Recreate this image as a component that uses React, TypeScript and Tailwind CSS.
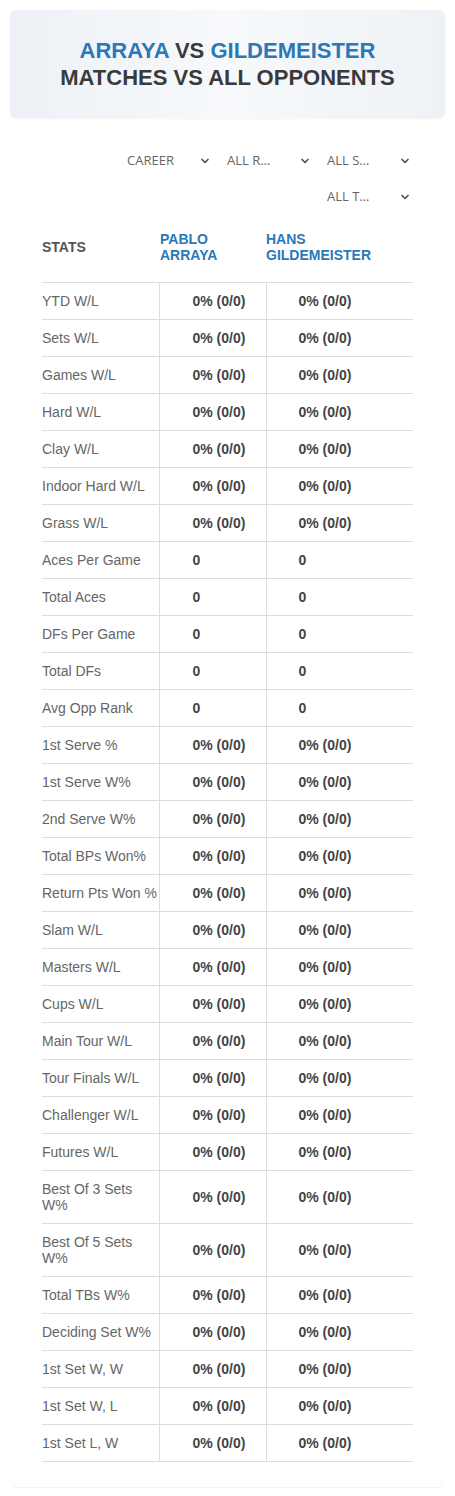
import React from 'react';
import { ChevronDown } from 'lucide-react';

type Row = {
  label: string;
  a: string;
  b: string;
};

const pct = '0% (0/0)';

const rows: Row[] = [
  { label: 'YTD W/L', a: pct, b: pct },
  { label: 'Sets W/L', a: pct, b: pct },
  { label: 'Games W/L', a: pct, b: pct },
  { label: 'Hard W/L', a: pct, b: pct },
  { label: 'Clay W/L', a: pct, b: pct },
  { label: 'Indoor Hard W/L', a: pct, b: pct },
  { label: 'Grass W/L', a: pct, b: pct },
  { label: 'Aces Per Game', a: '0', b: '0' },
  { label: 'Total Aces', a: '0', b: '0' },
  { label: 'DFs Per Game', a: '0', b: '0' },
  { label: 'Total DFs', a: '0', b: '0' },
  { label: 'Avg Opp Rank', a: '0', b: '0' },
  { label: '1st Serve %', a: pct, b: pct },
  { label: '1st Serve W%', a: pct, b: pct },
  { label: '2nd Serve W%', a: pct, b: pct },
  { label: 'Total BPs Won%', a: pct, b: pct },
  { label: 'Return Pts Won %', a: pct, b: pct },
  { label: 'Slam W/L', a: pct, b: pct },
  { label: 'Masters W/L', a: pct, b: pct },
  { label: 'Cups W/L', a: pct, b: pct },
  { label: 'Main Tour W/L', a: pct, b: pct },
  { label: 'Tour Finals W/L', a: pct, b: pct },
  { label: 'Challenger W/L', a: pct, b: pct },
  { label: 'Futures W/L', a: pct, b: pct },
  { label: 'Best Of 3 Sets W%', a: pct, b: pct },
  { label: 'Best Of 5 Sets W%', a: pct, b: pct },
  { label: 'Total TBs W%', a: pct, b: pct },
  { label: 'Deciding Set W%', a: pct, b: pct },
  { label: '1st Set W, W', a: pct, b: pct },
  { label: '1st Set W, L', a: pct, b: pct },
  { label: '1st Set L, W', a: pct, b: pct },
];

const filters = ['CAREER', 'ALL R…', 'ALL S…', 'ALL T…'];

function Filter({ label }: { label: string }) {
  return (
    <div className="flex h-9 w-[90px] items-center justify-between pl-[5px] pr-[1px] [font-family:'Open_Sans',sans-serif] text-[13px] text-[#666]">
      <span>{label}</span>
      <ChevronDown className="h-[12px] w-[12px] text-[#555]" strokeWidth={3.5} />
    </div>
  );
}

function App() {
  return (
    <div className="min-h-[1496px] bg-white p-[10px] [font-family:'Liberation_Sans',Arial,sans-serif]">
      <div className="flex h-[108px] flex-col items-center justify-center rounded-[6px] bg-gradient-to-r from-[#edf1f6] via-[#f7f9fb] to-[#eef2f6] shadow-[0_1px_2px_rgba(0,0,0,0.05)]">
        <h1 className="text-[22px] font-bold leading-[27px] text-[#3a3a3a]">
          <span className="text-[#2b78b8]">ARRAYA</span> VS{' '}
          <span className="text-[#2b78b8]">GILDEMEISTER</span>
        </h1>
        <h2 className="text-[22px] font-bold leading-[27px] text-[#3a3a3a]">
          MATCHES VS ALL OPPONENTS
        </h2>
      </div>

      <div className="mx-[2px] mt-[14px] rounded-[6px] px-[30px] pb-[25px] pt-[11px] shadow-[0_1px_2px_rgba(0,0,0,0.07)]">
        <div className="flex flex-wrap justify-end gap-x-[10px] pr-[1px]">
          {filters.map((f) => (
            <Filter key={f} label={f} />
          ))}
        </div>

        <table className="mt-[11px] w-full border-collapse text-[14px]">
          <thead>
            <tr className="border-b border-[#dddddd]">
              <th className="w-[117px] pb-[19px] pt-[5px] text-left font-bold leading-[16px] text-[#555]">STATS</th>
              <th className="w-[107px] pb-[19px] pt-[5px] pl-[1px] text-left font-bold leading-[16px] text-[#2b78b8]">
                PABLO
                <br />
                ARRAYA
              </th>
              <th className="pb-[19px] pt-[5px] text-left font-bold leading-[16px] text-[#2b78b8]">
                HANS
                <br />
                GILDEMEISTER
              </th>
            </tr>
          </thead>
          <tbody>
            {rows.map((r) => (
              <tr key={r.label} className="border-b border-[#dddddd]">
                <td className="border-r border-[#dddddd] py-[10px] align-middle leading-[16px] text-[#666]">
                  {r.label}
                </td>
                <td className="border-r border-[#dddddd] py-[10px] pl-[33px] font-bold leading-[16px] text-[#444]">
                  {r.a}
                </td>
                <td className="py-[10px] pl-[32px] font-bold leading-[16px] text-[#444]">{r.b}</td>
              </tr>
            ))}
          </tbody>
        </table>
      </div>
    </div>
  );
}

export default App;
